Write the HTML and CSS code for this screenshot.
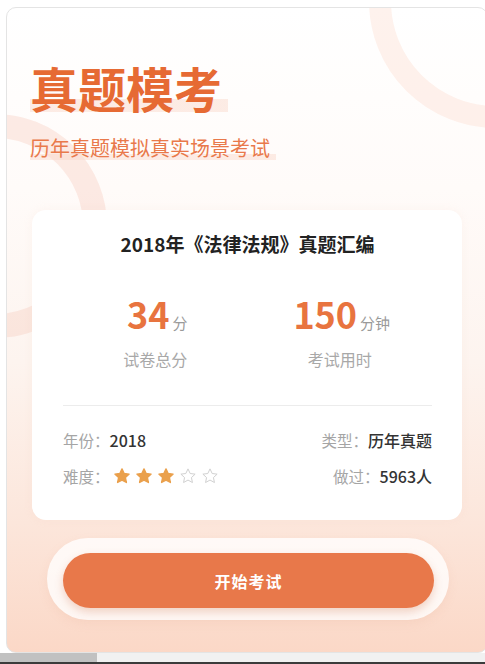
FILE: index.html
```html
<!DOCTYPE html>
<html lang="zh-CN">
<head>
<meta charset="utf-8">
<title>真题模考</title>
<link rel="stylesheet" href="styles.css">
</head>
<body>
<div class="frame">
  <div class="ring ring-top"></div>
  <div class="ring ring-left"></div>
  <header class="hero">
    <h1 class="hero-title"><span class="hl">真题模考</span></h1>
    <p class="hero-sub"><span class="hl">历年真题模拟真实场景考试</span></p>
  </header>
  <section class="card">
    <h2 class="card-title">2018年《法律法规》真题汇编</h2>
    <div class="stats">
      <div class="stat">
        <div class="stat-num">34<span class="unit">分</span></div>
        <div class="stat-label">试卷总分</div>
      </div>
      <div class="stat">
        <div class="stat-num">150<span class="unit">分钟</span></div>
        <div class="stat-label">考试用时</div>
      </div>
    </div>
    <div class="divider"></div>
    <div class="info-row">
      <div class="info"><span class="k">年份：</span><span class="v">2018</span></div>
      <div class="info"><span class="k">类型：</span><span class="v">历年真题</span></div>
    </div>
    <div class="info-row">
      <div class="info"><span class="k">难度：</span>
        <span class="stars">
          <svg class="star on" viewBox="0 0 24 24"><path d="M12 2.5l2.9 6.2 6.6.8-4.9 4.6 1.3 6.6L12 17.4l-5.9 3.3 1.3-6.6-4.9-4.6 6.6-.8z" stroke-linejoin="round"/></svg>
          <svg class="star on" viewBox="0 0 24 24"><path d="M12 2.5l2.9 6.2 6.6.8-4.9 4.6 1.3 6.6L12 17.4l-5.9 3.3 1.3-6.6-4.9-4.6 6.6-.8z" stroke-linejoin="round"/></svg>
          <svg class="star on" viewBox="0 0 24 24"><path d="M12 2.5l2.9 6.2 6.6.8-4.9 4.6 1.3 6.6L12 17.4l-5.9 3.3 1.3-6.6-4.9-4.6 6.6-.8z" stroke-linejoin="round"/></svg>
          <svg class="star off" viewBox="0 0 24 24"><path d="M12 2.5l2.9 6.2 6.6.8-4.9 4.6 1.3 6.6L12 17.4l-5.9 3.3 1.3-6.6-4.9-4.6 6.6-.8z" stroke-linejoin="round"/></svg>
          <svg class="star off" viewBox="0 0 24 24"><path d="M12 2.5l2.9 6.2 6.6.8-4.9 4.6 1.3 6.6L12 17.4l-5.9 3.3 1.3-6.6-4.9-4.6 6.6-.8z" stroke-linejoin="round"/></svg>
        </span>
      </div>
      <div class="info"><span class="k">做过：</span><span class="v">5963人</span></div>
    </div>
  </section>
  <div class="btn-wrap">
    <button class="btn">开始考试</button>
  </div>
</div>
<div class="hscroll"><div class="thumb"></div></div>
<div class="taskbar"></div>
</body>
</html>
```
FILE: styles.css
```css
* { box-sizing: border-box; }
html, body {
  margin: 0;
  padding: 0;
  background: #ffffff;
  overflow: hidden;
  width: 485px;
  height: 664px;
  font-family: "Noto Sans CJK SC", "Noto Sans", sans-serif;
}
.frame {
  position: relative;
  margin: 7px 0 0 6px;
  width: 482px;
  height: 646px;
  border: 1px solid #e4e4e4;
  border-radius: 10px;
  overflow: hidden;
  background: linear-gradient(to bottom, #ffffff 0%, #fffbf9 28%, #fdf4ef 55%, #fce6db 80%, #fbd8c7 100%);
  padding: 0 0 0 25px;
}
.ring {
  position: absolute;
  border-radius: 50%;
  pointer-events: none;
}
.ring-top {
  left: 362px;
  top: -134px;
  width: 254px;
  height: 254px;
  border: 22px solid rgba(250, 208, 190, 0.28);
}
.ring-left {
  left: -124px;
  top: 106px;
  width: 224px;
  height: 224px;
  border: 24px solid rgba(246, 196, 180, 0.32);
}
.hero {
  position: relative;
  padding-top: 50px;
  margin-left: -2px;
}
.hero-title {
  margin: 0;
  font-size: 48px;
  line-height: 58px;
  font-weight: 700;
  color: #e66a33;
}
.hl {
  display: inline-block;
  background: linear-gradient(to bottom, transparent 70%, rgba(250, 218, 205, 0.5) 70%, rgba(250, 218, 205, 0.5) 93%, transparent 93%);
  padding-right: 6px;
}
.hero-sub {
  margin: 18px 0 0 0;
  font-size: 20px;
  line-height: 28px;
  font-weight: 400;
  color: #e9794b;
}
.card {
  position: relative;
  margin-top: 48px;
  width: 430px;
  background: #ffffff;
  border-radius: 14px;
  padding: 21px 30px 33px 31px;
  box-shadow: 0 0 10px rgba(240, 200, 180, 0.12);
}
.card-title {
  margin: 0;
  text-align: center;
  font-size: 19px;
  line-height: 26px;
  font-weight: 700;
  color: #222222;
}
.stats {
  display: grid;
  grid-template-columns: 1fr 1fr;
  margin-top: 36px;
}
.stat {
  display: flex;
  flex-direction: column;
  align-items: center;
}
.stat-num {
  display: flex;
  align-items: baseline;
  height: 40px;
  font-size: 36px;
  line-height: 40px;
  font-weight: 700;
  color: #e8743f;
  padding-left: 4px;
}
.unit {
  font-size: 15px;
  line-height: 20px;
  font-weight: 400;
  color: #9a9a9a;
  margin-left: 3px;
}
.stat-label {
  margin-top: 15px;
  font-size: 16px;
  line-height: 22px;
  color: #a8a8a8;
}
.divider {
  height: 1px;
  background: #ececec;
  margin-top: 35px;
}
.info-row {
  display: flex;
  justify-content: space-between;
  align-items: center;
  margin-top: 23px;
  height: 22px;
}
.info-row + .info-row {
  margin-top: 14px;
}
.info {
  display: flex;
  align-items: center;
  font-size: 15.5px;
  line-height: 22px;
}
.k { color: #a5a5a5; }
.v { color: #333333; font-weight: 500; font-size: 16px; }
.stars {
  display: flex;
  gap: 4px;
  margin-left: 3px;
}
.star {
  width: 18px;
  height: 18px;
}
.star.on path { fill: #eaa04c; stroke: #eaa04c; stroke-width: 1.8; }
.star.off path { fill: none; stroke: #cfcfcf; stroke-width: 1.3; }
.btn-wrap {
  position: relative;
  margin: 18px 0 0 15px;
  width: 402px;
  height: 82px;
  border-radius: 41px;
  background: rgba(255, 255, 255, 0.78);
  box-shadow: 0 4px 10px rgba(230, 170, 140, 0.15);
  padding: 15px 15px 12px 16px;
}
.btn {
  display: block;
  width: 100%;
  height: 55px;
  border: none;
  border-radius: 28px;
  background: #e8784a;
  color: #ffffff;
  font-family: "Noto Sans CJK SC", "Noto Sans", sans-serif;
  font-size: 16px;
  font-weight: 700;
  letter-spacing: 1px;
  box-shadow: 0 4px 8px rgba(200, 95, 50, 0.25);
}
.hscroll {
  height: 9px;
  background: #f1f1f1;
}
.thumb {
  width: 97px;
  height: 9px;
  background: #c1c1c1;
}
.taskbar {
  height: 3px;
  background: #3b3b3b;
}
```
